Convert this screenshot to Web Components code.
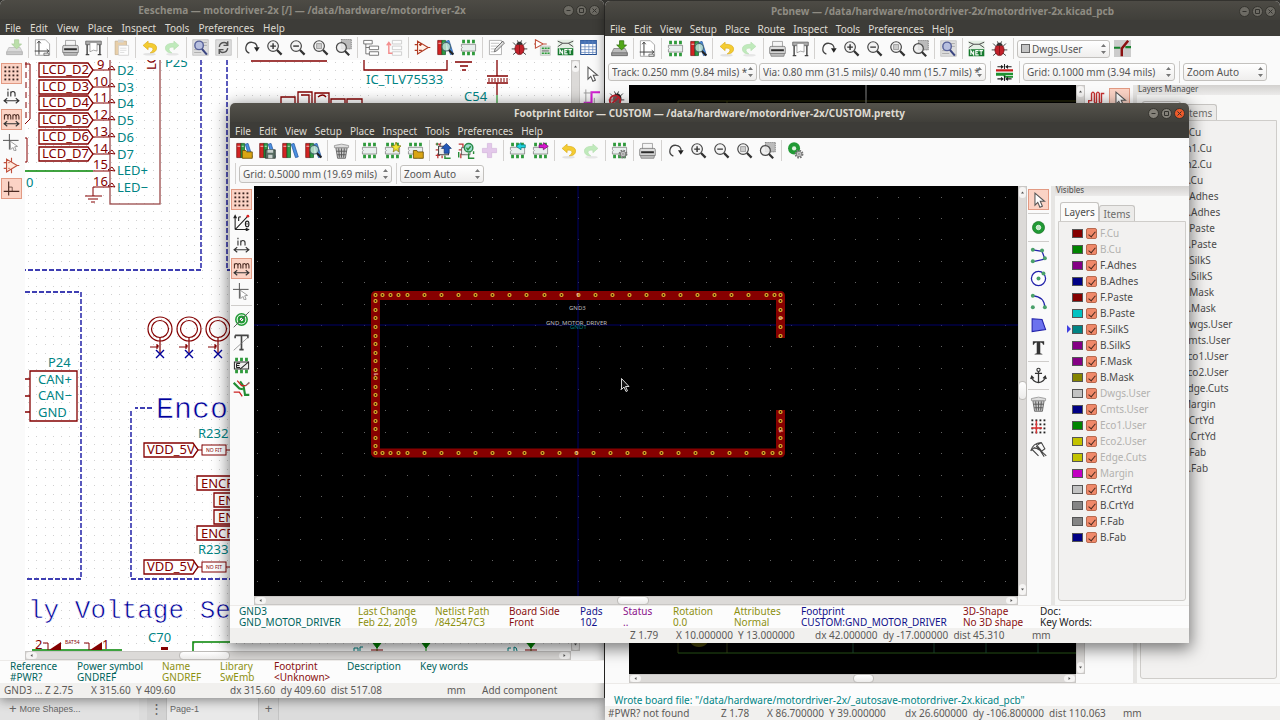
<!DOCTYPE html>
<html lang="en">
<head>
<meta charset="utf-8">
<title>KiCad desktop</title>
<style>
html,body{margin:0;height:100%;overflow:hidden}
body{font:10px/16px "Noto Sans","Open Sans",sans-serif;color:#4c4c4c;background:#3c3b37}
</style>
</head>
<body>
<kicad-desktop></kicad-desktop>

<script>
const lib = {};
const lens = '<circle cx="10" cy="10" r="7.5" fill="#f3f3f3" stroke="#4a4a4a" stroke-width="1.7"/><path d="M15.5 15.5L22 22" stroke="#333" stroke-width="3.2"/>';
const chipBody = '<path d="M2 7.500H22V17H2V13.500A1.800 1.800 0 0 0 2 10.500Z" fill="#e9eeee" stroke="#777" stroke-width="1"/>';
const pins = '<g fill="#2f9a3c"><path d="M3 1h4v5H3zM10 1h4v5h-4zM17 1h4v5h-4zM3 18h4v5H3zM10 18h4v5h-4zM17 18h4v5h-4z"/></g>';
const chip = chipBody + pins;
const books = '<path d="M1 2h6v20H1z" fill="#d32323" stroke="#701010"/><path d="M7 2h5v20H7z" fill="#2c9a45" stroke="#155b25"/><path d="M13 3l4-1 6 19-4 1z" fill="#4b91e2" stroke="#1e4f9a"/><path d="M2 6h4M8 6h3" stroke="#fff"/>';
const folder = '<path d="M9 12h5l1 2h8v9H9z" fill="#d9a514" stroke="#6d5208" stroke-width="1.200"/>';
const bug = '<path d="M3 5l5 5M21 5l-5 5M1 14h22M3 22l6-5M21 22l-6-5M9 2l2 4M15 2l-2 4" stroke="#333" stroke-width="1.300"/>';
const drive = '<path d="M4 12h16l3 6v4H1v-4z" fill="#bcbcbc" stroke="#777"/><path d="M1 18h22v4H1z" fill="#9a9a9a" stroke="#666"/>';
const gear = '<circle cx="17" cy="17" r="4.500" fill="none" stroke="#777" stroke-width="3.500" stroke-dasharray="2.200 1.300"/><circle cx="17" cy="17" r="3.800" fill="#ddd" stroke="#666"/><circle cx="17" cy="17" r="1.500" fill="#fff" stroke="#666"/>';
const dotGrid = (c) => { let s=''; for (let y=0;y<4;y++) for (let x=0;x<4;x++) s+=`<rect x="${2+x*5.7}" y="${2+y*5.7}" width="2.6" height="2.6" fill="${c}"/>`; return s; };
const arrows = '<path d="M2 18h20M6 14.500L1.500 18 6 21.500M18 14.500l4.500 3.500L18 21.500" fill="none" stroke="#333" stroke-width="1.500"/>';
Object.assign(lib, {
  save: drive + '<path d="M12 1h6v6h4l-7 7-7-7h4z" fill="#52a818" stroke="#2b6b08"/>',
  saveoff: '<g opacity=".5">' + drive + '<path d="M12 1h6v6h4l-7 7-7-7h4z" fill="#7cc35a" stroke="#5b9b3c"/></g>',
  page: '<path d="M2 1h14l6 6v16H2z" fill="#fff" stroke="#888"/><path d="M7 3v19M1 17h20M4.500 6L7 3l2.500 3M18 14.500l3 2.500-3 2.500" fill="none" stroke="#444" stroke-width="1.400"/><path d="M14 20h7v3h-7z" fill="#eee" stroke="#555"/>',
  print: '<path d="M5 2h14v9H5z" fill="#f5f5f5" stroke="#888"/><path d="M1 11q0-2 2-2h18q2 0 2 2v8H1z" fill="#dcdcdc" stroke="#666"/><path d="M3 13h18v3H3z" fill="#2c2c2c"/><path d="M2 19h20l-1 4H3z" fill="#bbb" stroke="#777"/>',
  plot: '<path d="M1 3h22v5H1z" fill="#aaa" stroke="#555"/><path d="M3 8v14M21 8v14M1 22h5M18 22h5" stroke="#444" stroke-width="2"/><path d="M7 5h10v12q-5-3-10 1z" fill="#fff" stroke="#888"/>',
  paste: '<g opacity=".6"><path d="M3 3h16v19H3z" fill="#dcb273" stroke="#a07c45"/><path d="M7 1h8v4H7z" fill="#bbb"/><path d="M8 9h14v14H8z" fill="#fff" stroke="#aaa"/><path d="M10 13h9M10 16h9M10 19h6" stroke="#bbb"/></g>',
  undo: '<ellipse cx="12" cy="21.500" rx="9" ry="1.800" fill="#e2e2e2"/><path d="M10 3L3 9l7 6v-3.500q7-.5 7 3 0 3-4 5 9 0 9-7 0-6.500-12-6.500z" fill="#f4cc32" stroke="#dcae1c"/>',
  redo: '<g opacity=".55"><ellipse cx="12" cy="21.500" rx="9" ry="1.800" fill="#d5d5d5"/><path d="M14 3l7 6-7 6v-3.500q-7-.5-7 3 0 3 4 5-9 0-9-7 0-6.500 12-6.500z" fill="#8fdc87" stroke="#7cc874"/></g>',
  find: '<path d="M1 1h22v22H1z" fill="#dedede" stroke="#bbb"/><path d="M14 5h7M16 9h5M3 19h10M3 15h6" stroke="#999"/><circle cx="10" cy="9" r="6" fill="#b7bfdf" stroke="#576199" stroke-width="2"/><path d="M14 14l7 8" stroke="#3b4681" stroke-width="3"/>',
  replace: '<path d="M1 1h22v22H1z" fill="#dedede" stroke="#bbb"/><path d="M6 11q1-6 7-6 4 0 5 4M18 13q-1 6-7 6-4 0-5-4M18 3v6h-6M6 21v-6h6" fill="none" stroke="#555" stroke-width="2"/>',
  refresh: '<path d="M9 20A8 8 0 1 1 20 12" fill="none" stroke="#444" stroke-width="1.800"/><path d="M15.500 11.500h8l-4 6.500z" fill="#222"/>',
  zoomin: lens + '<path d="M6 10h8M10 6v8" stroke="#333" stroke-width="2"/>',
  zoomout: lens + '<path d="M6 10h8" stroke="#333" stroke-width="2"/>',
  zoomfit: lens + '<path d="M6.500 6.500h7v7h-7z" fill="#ccc" stroke="#888"/>',
  zoomsel: '<path d="M9 0h14v14H9z" fill="#bbb" stroke="#666" stroke-dasharray="2 1"/><circle cx="9" cy="12" r="7" fill="#ececec" fill-opacity=".85" stroke="#4a4a4a" stroke-width="1.700"/><path d="M14 17l6 6" stroke="#333" stroke-width="3"/>',
  tree: '<path d="M1 2h12v5H1zM9 10h13v5H9zM9 18h13v5H9zM4 7v14h5M4 12h5" fill="#fff" stroke="#666" stroke-width="1.200"/>',
  treeup: '<g opacity=".5"><path d="M9 2h13v5H9zM9 10h13v5H9zM9 18h13v5H9z" fill="#fff" stroke="#888"/><path d="M9 20H4V6M1 9l3-4 3 4" fill="none" stroke="#e22" stroke-width="2"/></g>',
  opamp: '<path d="M5 3l15 9L5 21zM1 8h4M1 16h4M20 12h3M7 8h4M9 6v4M7 16h4" fill="#fff3ea" stroke="#b03a22" stroke-width="1.600"/>',
  browse: books + '<circle cx="13" cy="11" r="6" fill="#bfe3d3" fill-opacity=".85" stroke="#44636b" stroke-width="1.500"/><path d="M17 16l6 6" stroke="#222" stroke-width="3"/>',
  chip,
  edit: '<path d="M2 2h17v20H2z" fill="#fff" stroke="#999"/><path d="M4 6h12M4 10h10M4 14h7M4 18h5" stroke="#aaa"/><path d="M9 18l1-4L21 3l2 3-11 11z" fill="#ddd" stroke="#444"/>',
  bug: bug + '<ellipse cx="12" cy="14" rx="6.500" ry="8" fill="#c2202a" stroke="#6f0d12"/><path d="M8 6q4-4 8 0v2H8z" fill="#333"/><path d="M12 8v13" stroke="#701010"/>',
  bugoff: bug + '<ellipse cx="13" cy="12" rx="6" ry="7" fill="#222"/><circle cx="10" cy="15" r="7.500" fill="#9b8080" fill-opacity=".6" stroke="#c6202c" stroke-width="2.500"/><path d="M5 20L15 10" stroke="#c6202c" stroke-width="2.500"/>',
  assoc: '<path d="M2 1l11 6-11 6zM0 7h2M13 7h5" fill="#fff" stroke="#c0503c" stroke-width="1.500"/><path d="M9 10h14v13H9z" fill="#dbe7dc" stroke="#bbb"/><path d="M11 12h3v2h-3zM15 12h3v2h-3zM19 12h3v2h-3zM11 19h3v2h-3zM15 19h3v2h-3zM19 19h3v2h-3z" fill="#2f9a3c"/><path d="M11 15h10v3H11z" fill="#999"/>',
  net: '<path d="M1 1h22v22H1z" fill="#e4efe4"/><path d="M1 3l7 3h8l7-3M1 11l7-5M23 11l-7-5" fill="none" stroke="#444" stroke-width="1.300"/><path d="M1 13h22v10H1z" fill="#167a2e"/><path d="M4 21v-6l4 6v-6M15 15h-4v6h4M11 18h3M16 15h5M18.500 15v6" fill="none" stroke="#fff" stroke-width="1.500"/>',
  table: '<path d="M1 2h22v20H1z" fill="#fff" stroke="#234e91" stroke-width="1.500"/><path d="M1 2h22v5H1z" fill="#4672b5"/><path d="M1 11h22M1 15h22M1 19h22M7 2v20M12.500 2v20M18 2v20" stroke="#5f84bd"/>',
  libopen: books + folder,
  libsave: books + '<path d="M9 11h14v12H9z" fill="#556a60" stroke="#26302b"/><path d="M12 11h8v4h-8zM13 18h6v5h-6z" fill="#c8d0cc"/>',
  lib: books,
  trash: '<path d="M4 8h16l-2.500 15h-11z" fill="#c9c9c9" stroke="#444"/><path d="M8 9l1 13M12 9v13M16 9l-1 13M5 13h14M6 18h12" stroke="#555" stroke-width="1.300"/><path d="M2 5q10-4 20 0v3H2z" fill="#ddd" stroke="#888"/>',
  chipnew: chip + '<path d="M17 0l2 5 5 .5-4 3.500 1 5-4-3-4 3 1-5-4-3.500 5-.5z" fill="#f0e333" stroke="#7b7410"/>',
  chipopen: chip + folder,
  brdup: '<path d="M1 3h6v5M1 11h5v8H1M10 19v4M4 23v-6h6" fill="none" stroke="#b33" stroke-width="1.800"/><path d="M8 3v-2M5 6h14v12H5z" fill="#eee" stroke="#444" stroke-width="1.500"/><path d="M16 2l7 7h-3v7h-7V9h-4z" fill="#2459b8" stroke="#0d2f70"/><path d="M3 1v4M14 19v4h8" fill="none" stroke="#298c39" stroke-width="2"/>',
  brdins: '<path d="M1 3h6v5M1 11h6M4 23v-6h6" fill="none" stroke="#b33" stroke-width="1.800"/><path d="M5 8h12v10H5z" fill="#eee" stroke="#444"/><circle cx="15" cy="8" r="6" fill="#9edbcf" stroke="#2a8b49" stroke-width="2"/><path d="M12 8l2 3 4-5M15 16v7h8M1 14v8M22 17v-4" fill="none" stroke="#298c39" stroke-width="2"/>',
  plus: '<path d="M9 2h6v7h7v6h-7v7H9v-7H2V9h7z" fill="#e3c8ea" stroke="#d3b6dc"/>',
  chipin: chip + '<path d="M23 4h-6V1l-7 5 7 5V8h6z" fill="#20d5de" stroke="#0c747a"/>',
  chipout: chip + '<path d="M10 4h6V1l7 5-7 5V8h-6z" fill="#d918d0" stroke="#720c6d"/>',
  chipgear: chip + gear,
  padgear: '<circle cx="10" cy="9" r="8.500" fill="#219a35"/><circle cx="10" cy="9" r="3" fill="#dff0df"/>' + gear,
  grid: dotGrid('#3a2420'),
  polar: '<path d="M3 22V3M3 22h19M1 6l2-4 2 4M18 20l4 2-4 2M3 22L20 4" fill="none" stroke="#222" stroke-width="1.500"/><circle cx="21" cy="3" r="2" fill="#d22"/><path d="M8 10V5q0-1 3-1" fill="none" stroke="#222" stroke-width="1.600"/><ellipse cx="20" cy="14" rx="2.500" ry="4" fill="none" stroke="#222" stroke-width="1.600"/><path d="M18 14h4" stroke="#222"/>',
  inch: '<path d="M7 5v7M7 1v2M11 12V5M11 8q0-3 3-3t3 3v4" fill="none" stroke="#333" stroke-width="1.600"/>' + arrows,
  mm: '<path d="M2 12V5M2 8q0-3 2.500-3T7 8v4M7 8q0-3 2-3t2 3v4M14 12V5M14 8q0-3 2-3t2.500 3v4M18.500 8q0-3 2-3t2 3v4" fill="none" stroke="#4a2a22" stroke-width="1.500"/>' + arrows,
  cursor: '<path d="M0 9h22M9 0v22" stroke="#555" stroke-width="1.400"/><path d="M10 10l1 12 3-3 2 5 2.500-1-2-5 4-.5z" fill="#fff" stroke="#777"/>',
  hidepin: '<path d="M5 3l15 9L5 21zM1 8h4M1 16h4M20 12h3M12 1v6M12 17v6" fill="#ffe9dc" stroke="#c0503c" stroke-width="1.600"/><path d="M7 8h3M7 16h3" stroke="#c0503c"/>',
  ortho: '<path d="M8 2v20M1 16h22" stroke="#4a2a22" stroke-width="1.600"/><path d="M8 10h5v6" fill="none" stroke="#4a2a22"/>',
  padsk: '<circle cx="12" cy="12" r="8" fill="#fff" stroke="#219a35" stroke-width="2.200"/><circle cx="12" cy="12" r="4" fill="none" stroke="#219a35" stroke-width="3"/><path d="M1 23L23 1" stroke="#555" stroke-width="1.300"/>',
  textsk: '<path d="M3 2h18v4M3 6V2M12 2v20M9 22h6" fill="none" stroke="#444" stroke-width="2.300"/><path d="M1 23L23 3" stroke="#777"/>',
  modsk: pins + '<path d="M2 7h20v10H2z" fill="#eee" stroke="#333" stroke-width="1.500"/><path d="M5 9h5M5 12h4M5 15h5M5 9v6M10 17l12-10" stroke="#222" stroke-width="1.500"/>',
  contrast: '<path d="M10 2l5 7 2 12h6" fill="none" stroke="#218c33" stroke-width="3"/><path d="M1 4l8 8 5 1" fill="none" stroke="#218c33" stroke-width="3"/><path d="M6 1l6 7h6l5-4" fill="none" stroke="#c22" stroke-width="1.800"/><path d="M1 17h8l4 6" fill="none" stroke="#c22" stroke-width="1.800"/><path d="M18 8l5-5" stroke="#888" stroke-width="1.500"/>',
  arrow: '<path d="M7 3v17l4-4 3 7 3.500-1.500-3-7h6z" fill="#fff" stroke="#555" stroke-width="1.500"/>',
  wire: '<path d="M1 21h11V6h12" fill="none" stroke="#d61fd6" stroke-width="3"/><path d="M4 2v19M1 7h11M16 14v9" stroke="#999" stroke-width="1.300"/>',
  pad: '<circle cx="12" cy="12" r="8.500" fill="#219a35" stroke="#12701f"/><circle cx="12" cy="12" r="3.200" fill="#bfe5c4" stroke="#fff"/>',
  poly: '<path d="M4 4l13 2 4 11-18 4" fill="none" stroke="#2222aa" stroke-width="1.800"/><g fill="#4aa06a"><circle cx="4" cy="4" r="2.800"/><circle cx="17" cy="5" r="2.800"/><circle cx="21" cy="16" r="2.800"/><circle cx="4" cy="20" r="2.800"/></g>',
  circle: '<circle cx="12" cy="12" r="10" fill="#fff" stroke="#2222aa" stroke-width="1.800"/><g fill="#4aa06a"><circle cx="12" cy="12" r="2.800"/><circle cx="19" cy="5" r="2.800"/></g>',
  arc: '<path d="M4 4q16 1 17 16" fill="none" stroke="#2222aa" stroke-width="1.800"/><g fill="#4aa06a"><circle cx="4" cy="4" r="2.800"/><circle cx="21" cy="20" r="2.800"/><circle cx="4" cy="20" r="2.800"/></g>',
  area: '<path d="M3 4l14 1 5 14-19 3z" fill="#6c72ee" stroke="#2222aa" stroke-width="1.500"/>',
  text: '<path d="M4 3h16v5h-1.500q-.5-3-4-3v15l3 1v1h-11v-1l3-1V5q-3.500 0-4 3H4z" fill="#333"/>',
  anchor: '<circle cx="12" cy="4" r="2.300" fill="none" stroke="#333" stroke-width="1.600"/><path d="M12 6v16M7 9h10M2 14q2 7 10 8 8-1 10-8M1 17l1.500-4 3 3M23 17l-1.500-4-3 3" fill="none" stroke="#333" stroke-width="1.800"/>',
  origin: dotGrid('#222') + '<path d="M9 4v18M2 14h15" stroke="#d33" stroke-width="2"/>',
  measure: '<path d="M1 14Q4 3 16 2q-6 3-7 6l14 13M3 12l9 9M16 2l5 9-4 3M6 9l8 4 6 9M9 5l8 10M1 14l4-4 6 1" fill="none" stroke="#444" stroke-width="1.500"/>',
  layers: '<path d="M0 0h24v24H0z" fill="#ccc"/><path d="M0 11h9M16 10h8" stroke="#17832d" stroke-width="3"/><path d="M11 23V12L20 1" fill="none" stroke="#8b1010" stroke-width="3.500"/>',
  track: '<path d="M0 9h24" stroke="#c91c1c" stroke-width="3"/><path d="M0 15h11l2 3h11M0 14h24" stroke="#1f9131" stroke-width="3" fill="none"/><path d="M2 4h7M22 4h-7M2 21h7M22 21h-7M12 0v7M12 17v7" stroke="#222" stroke-width="1.500"/><path d="M7 1l4 3-4 3zM17 1l-4 3 4 3zM7 18l4 3-4 3zM17 18l-4 3 4 3z" fill="#222"/>',
  tune: '<path d="M1 20v-5h4V5q2-4 4 0v12q2 4 3 0V5q2-4 4 0v12q2 3 3 0V5h4" fill="none" stroke="#c63030" stroke-width="2"/>',
});

function define(name, css, html, setup) {
  const t = document.createElement('template');
  t.innerHTML = `<style>:host{display:block;box-sizing:border-box}*{box-sizing:border-box}button{font:inherit;color:inherit;border:0;background:none;margin:0;padding:0}${css}</style>${html}`;
  customElements.define(name, class extends HTMLElement {
    connectedCallback() {
      if (this.shadowRoot) return;
      const root = this.attachShadow({mode: 'open'});
      root.append(t.content.cloneNode(true));
      if (setup) setup(this, root);
    }
  });
}
const attr = (el, n, d='') => el.getAttribute(n) ?? d;

/* toolbar parts */
define('tool-button', `
:host{width:21px;height:21px;flex:none}
button{display:block;width:21px;height:21px;padding:1px;border:1px solid transparent}
:host([active]) button{background:#fbd3c5;border-color:#e29a83}
svg{display:block;width:17px;height:17px}`,
`<button type="button"><svg viewBox="0 0 24 24" aria-hidden="true"></svg></button>`,
(el, r) => {
  r.querySelector('svg').innerHTML = lib[attr(el,'icon')];
  r.querySelector('button').setAttribute('aria-label', attr(el,'icon'));
});
define('tool-group', `
:host{display:flex;gap:2px;align-items:center;border-left:1px solid #d3d1cf;padding-left:3px}
:host([first]){border-left:0;padding-left:0}
:host([vertical]){flex-direction:column;border-left:0;padding-left:0;border-top:1px solid #cfcdcb;padding-top:3px}
:host([vertical][first]){border-top:0;padding-top:0}`, `<slot></slot>`,
(el) => {
  (attr(el,'icons')).split(' ').filter(Boolean).forEach(n => {
    const b = document.createElement('tool-button');
    if (n.endsWith('*')) { b.setAttribute('active',''); n = n.slice(0,-1); }
    b.setAttribute('icon', n);
    el.append(b);
  });
});
define('tool-bar', `
:host{display:flex;gap:3px;height:25px;padding:2px 4px;background:#fafafa}
:host([second]){height:23px;padding:0 5px 2px;gap:4px}
:host([column]){flex-direction:column;width:24px;height:auto;align-items:flex-start;padding:3px 1px;flex:none}
:host([wide]){width:48px}`, `<slot></slot>`);
define('combo-box', `
:host{display:flex;align-items:center;height:18px;flex:none;border:1px solid #c3c1be;border-radius:3px;padding:0 3px;background:linear-gradient(#fff,#efeeed)}
i{width:9px;height:9px;border:1px solid #666;background:#c4c4c4;flex:none;margin-right:2px}
:host(:not([swatch])) i{display:none}
select{appearance:none;flex:1;min-width:0;height:16px;border:0;background:none;padding:0;margin:0 -4px 0 0;font:inherit;color:#555;outline:0}
svg{width:5px;height:10px;flex:none}`,
`<i></i><select><option></option></select><svg viewBox="0 0 5 10"><path d="M0 3L2.500 0 5 3zM0 7l2.500 3L5 7z" fill="#777"/></svg>`,
(el, r) => {
  el.style.width = attr(el,'size') + 'px';
  r.querySelector('option').textContent = attr(el,'value');
  r.querySelector('select').setAttribute('aria-label', attr(el,'value'));
});

/* window frame */
define('desk-window', `
:host{position:absolute;display:flex;flex-direction:column;background:#fafafa;border-radius:5px 5px 0 0;overflow:hidden;box-shadow:0 2px 12px rgba(0,0,0,.45)}
.bar{height:19px;display:grid;grid-template-columns:1fr auto 1fr;align-items:center;background:linear-gradient(#4d4b45,#403f3a);color:#8f8c83;font-weight:700;line-height:20px;white-space:pre;flex:none}
:host([focused]) .bar{color:#dfdbd2;background:linear-gradient(#54524b,#403f3a)}
.ctl{justify-self:end;display:flex;gap:2px;padding-right:4px}
.ctl button{width:11px;height:11px;border-radius:50%;background:#6d6b64;border:1px solid #35342f}
:host([focused]) .ctl button{background:#85827a}
:host([focused]) .ctl button:last-child{background:#ee5a2a}
.ctl svg{display:block;width:9px;height:9px}
nav{height:16px;display:flex;gap:var(--menu-gap,8px);padding-left:5px;background:#3d3c38;color:#dedad2;line-height:18px;flex:none;white-space:pre}
.body{flex:1;min-height:0;display:flex}
h1{font:inherit;margin:0;grid-column:2}`,
`<div class="bar"><h1></h1><div class="ctl">
<button type="button" aria-label="Minimise"><svg viewBox="0 0 9 9"><path d="M2.500 4.500h4" stroke="#33322e"/></svg></button>
<button type="button" aria-label="Maximise"><svg viewBox="0 0 9 9"><path d="M2.500 2.500h4v4h-4z" fill="none" stroke="#33322e"/></svg></button>
<button type="button" aria-label="Close"><svg viewBox="0 0 9 9"><path d="M2.500 2.500l4 4M6.500 2.500l-4 4" stroke="#33322e"/></svg></button></div></div>
<nav></nav><slot name="tools"></slot><div class="body"><slot></slot></div><slot name="info"></slot><slot name="status"></slot>`,
(el, r) => {
  r.querySelector('h1').textContent = attr(el,'heading');
  attr(el,'menus').split(' ').forEach(m => {
    const b = document.createElement('button'); b.type = 'button'; b.textContent = m; r.querySelector('nav').append(b);
  });
});

/* canvas with its two scroll bars */
define('scroll-view', `
:host{flex:1;min-width:0;display:grid;grid-template-columns:minmax(0,1fr) 9px;grid-template-rows:minmax(0,1fr) 9px}
.v,.h{display:flex;background:#dcdad8;border:1px solid #c9c7c5}
.v{flex-direction:column}
.cap{flex:none;background:#f5f4f3;border-radius:4px;display:block}
.v .cap{width:7px;height:11px}.h .cap{width:11px;height:7px}
.track{flex:1;position:relative}
.thumb{position:absolute;background:linear-gradient(#fff,#ecebea);border:1px solid #bdbbb8;border-radius:4px}
.h .thumb{height:9px;top:-1px;left:var(--hx);width:var(--hw)}
.v .thumb{width:9px;left:-1px;top:var(--vy,0);height:var(--vh,0);display:var(--vd,none)}
svg{display:block;width:100%;height:100%}`,
`<slot></slot>
<div class="v"><span class="cap"><svg viewBox="0 0 7 11"><path d="M2 6.500h3L3.500 4.500z" fill="#555"/></svg></span><div class="track"><div class="thumb"></div></div><span class="cap"><svg viewBox="0 0 7 11"><path d="M2 4.500h3L3.500 6.500z" fill="#555"/></svg></span></div>
<div class="h"><span class="cap"><svg viewBox="0 0 11 7"><path d="M6.500 2v3L4.500 3.500z" fill="#555"/></svg></span><div class="track"><div class="thumb"></div></div><span class="cap"><svg viewBox="0 0 11 7"><path d="M4.500 2v3L6.500 3.500z" fill="#555"/></svg></span></div>`);

/* message panel: "Title|value|colour" per field */
define('info-panel', `
:host{display:grid;height:23px;line-height:11px;white-space:pre;background:#fcfcfc;border-top:1px solid #eceae8;flex:none;position:relative;z-index:1}
div{min-width:0}p{margin:0}`, ``,
(el, r) => {
  el.style.gridTemplateColumns = attr(el,'columns').split(' ').map(n => n + 'px').join(' ') + ' auto';
  attr(el,'fields').split(';').forEach(f => {
    const [a, b, c] = f.split('|');
    const d = document.createElement('div'); d.style.color = c;
    for (const t of [a, b]) { const p = document.createElement('p'); p.textContent = t || '\u00a0'; d.append(p); }
    r.append(d);
  });
});
define('status-bar', `
:host{display:grid;height:15px;line-height:15px;white-space:pre;background:#f1f0ee;color:#5c5a58;flex:none}`, ``,
(el, r) => {
  el.style.gridTemplateColumns = attr(el,'columns').split(' ').map(n => n + 'px').join(' ') + ' auto';
  attr(el,'fields').split(';').forEach(f => { const s = document.createElement('span'); s.textContent = f; r.append(s); });
});

/* layer list */
define('layer-row', `
:host{display:flex;align-items:center;height:16px}
.mark{width:13px;display:flex;justify-content:flex-end;padding-right:1px;flex:none}
.mark svg{width:4px;height:8px;display:none}
:host([current]) .mark svg{display:block}
.sw{width:11px;height:9px;border:1px solid #555;margin-right:3px;flex:none}
label{display:flex;align-items:center;gap:3px}
:host([dim]) label{color:#b3b1af}
input{appearance:none;width:11px;height:11px;margin:0;border:1px solid #b96a50;border-radius:2px;background:#f0896a;display:grid;place-items:center}
input:checked::before{content:"";width:3px;height:6px;border:solid #4a2a20;border-width:0 1px 1px 0;transform:rotate(40deg)}`,
`<span class="mark"><svg viewBox="0 0 4 8"><path d="M0 0l4 4-4 4z" fill="#4040e0"/></svg></span><span class="sw"></span><label><input type="checkbox" checked><span></span></label>`,
(el, r) => {
  r.querySelector('.sw').style.background = attr(el,'color');
  r.querySelector('label span').textContent = attr(el,'name');
});
define('layer-panel', `
:host{display:flex;flex-direction:column;flex:none;background:#f8f8f7;border-left:4px solid #e6e5e3}
h2{margin:0;height:10px;padding-left:1px;font:8px/8px "Noto Sans",sans-serif;background:linear-gradient(#d3d1cf,#ecebea);white-space:pre}
.tabs{display:flex;align-items:flex-end;margin-top:6px;padding-left:5px;height:19px;flex:none}
button{border:1px solid #c6c4c1;border-bottom:0;border-radius:3px 3px 0 0;height:16px;background:#ecebe9;width:36px;color:#6d6b69}
button[aria-selected=true]{height:19px;background:#fbfbfa;width:39px;color:#4c4c4c}
.box{flex:1;min-height:0;margin:0 3px 4px;border:1px solid #cfcdca;border-radius:0 0 3px 3px;background:#f2f1f0;padding-top:3px}`,
`<h2></h2><div class="tabs" role="tablist"><button type="button" role="tab" aria-selected="true">Layers</button><button type="button" role="tab">Items</button></div><div class="box"></div>`,
(el, r) => {
  el.style.width = attr(el,'size') + 'px';
  r.querySelector('h2').textContent = attr(el,'heading');
  const inner = attr(el,'inner').split(',').filter(Boolean).map(n => [n,'#c2c200']);
  const all = [['F.Cu','#840000',1],...inner,['B.Cu','#008400',1],['F.Adhes','#840084'],['B.Adhes','#000084'],['F.Paste','#840000'],['B.Paste','#00c2c2'],['F.SilkS','#008484'],['B.SilkS','#840084'],['F.Mask','#840084'],['B.Mask','#848400'],['Dwgs.User','#c2c2c2',1],['Cmts.User','#000084',1],['Eco1.User','#008400',1],['Eco2.User','#c2c200',1],['Edge.Cuts','#c2c200',1],['Margin','#c200c2',1],['F.CrtYd','#c2c2c2'],['B.CrtYd','#848484'],['F.Fab','#848484'],['B.Fab','#000084']];
  for (const [n, c, dim] of all) {
    const row = document.createElement('layer-row');
    row.setAttribute('name', n); row.setAttribute('color', c);
    if (dim && !inner.length) row.setAttribute('dim','');
    if (n === 'F.SilkS') row.setAttribute('current','');
    r.querySelector('.box').append(row);
  }
});

/* drawing canvases */
const canvasCss = `:host{min-width:0;min-height:0;overflow:hidden}svg{display:block;width:100%;height:100%}text{white-space:pre}`;
function dots(x0, y0, step, w, h) {
  let d = '';
  for (let y = y0; y < h; y += step) for (let x = x0; x < w; x += step) d += `M${Math.round(x)} ${Math.round(y)}h1`;
  return d;
}
const M = '#840000', T = '#008484', B = '#00009a';
const label = (x, y, s, w) => `<path d="M${x} ${y-7}h${w-5}l5 7-5 7h-${w-5}z" fill="#fff" stroke="${M}" stroke-width="1.300"/><text x="${x+3}" y="${y+4}" fill="${M}">${s}</text>`;
let sch = '';
['LCD_D2','LCD_D3','LCD_D4','LCD_D5','LCD_D6','LCD_D7'].forEach((s,i) => {
  const y = Math.round(70 + i*16.7);
  sch += label(39, y, s, 54) + `<path d="M93 ${y}h17" stroke="${M}"/><path d="M108 ${y-1}l4-3 3 4z" fill="none" stroke="${M}"/>`;
});
['9','10','11','12','13','14','15','16'].forEach((s,i) => { sch += `<text x="${i?93:97}" y="${Math.round(69+i*16.7)}" fill="${M}">${s}</text>`; });
['D2','D3','D4','D5','D6','D7','LED+','LED−'].forEach((s,i) => { sch += `<text x="117" y="${Math.round(75+i*16.7)}" fill="${T}">${s}</text>`; });
const circ = x => `<g fill="none" stroke="${M}" stroke-width="1.200"><circle cx="${x}" cy="329" r="12"/><circle cx="${x}" cy="329" r="8.500"/><path d="M${x} 338v15M${x-10} 347h8v-2M${x-3} 344v5"/></g><path d="M${x-4} 350l8 8M${x+4} 350l-8 8" stroke="${B}" stroke-width="1.400"/>`;
const vdd = y => label(144, y, 'VDD_5V', 54) + `<path d="M198 ${y}h4M226 ${y}h30" stroke="${M}"/><rect x="202" y="${y-5}" width="24" height="10" fill="#fff" stroke="${M}"/><text x="206" y="${y+2}" font-size="5" fill="${M}">NO FIT</text>`;
const enc = (x, y, s) => `<path d="M${x} ${y-7}h60v14h-60z" fill="#fff" stroke="${M}" stroke-width="1.300"/><text x="${x+4}" y="${y+5}" fill="${M}">${s}</text>`;
sch += `
<path d="M25 171h68" stroke="#008400" stroke-width="1.500"/><path d="M93 171h17M110 187H93v9M85 196h17M88 199h10M91 202h4" stroke="${M}" fill="none"/><path d="M108 170l4-3 3 4zM108 186l4-3 3 4z" fill="none" stroke="${M}"/>
<rect x="110" y="40" width="50" height="164" fill="none" stroke="#9a4a4a" stroke-width="1.300"/>
<text x="165" y="67" fill="${T}">P25</text><text transform="translate(156 70) rotate(-90)" fill="${M}">LC</text>
<text x="26" y="187" fill="${T}">0</text>
<path d="M25 64h5v55l-5 5M25 138h2v24h-2" fill="none" stroke="${M}"/>
<path d="M26 62v60" stroke="${M}" stroke-dasharray="6 4"/>
<path d="M201 60v210H25M227 60v210h60M25 292h56v287H25M152 408h-17M131 411v168h130" fill="none" stroke="${B}" stroke-width="1.300" stroke-dasharray="5 2"/>
${circ(160)}${circ(189)}${circ(218)}
<text x="48" y="367" fill="${T}">P24</text><path d="M30 371h47v50H30zM25 379h5M25 396h5M25 412h5" fill="none" stroke="${M}" stroke-width="1.300"/>
<text x="38" y="384" fill="${T}">CAN+</text><text x="38" y="400" fill="${T}">CAN−</text><text x="38" y="417" fill="${T}">GND</text>
<g fill="${B}" stroke="#fff" stroke-width=".6" font-family="Liberation Mono"><text x="156" y="418" font-size="30">Enco</text>
<text x="28" y="618" font-size="26">ly Voltage Se</text></g>
<text x="198" y="438" fill="${T}">R232</text><text x="198" y="554" fill="${T}">R233</text>
${vdd(450)}${vdd(567)}${enc(197,483,'ENCF')}${enc(214,500,'EN')}${enc(214,517,'EN')}${enc(197,533,'ENCF')}
<text x="148" y="642" fill="${T}">C70</text>
<path d="M32 650h90M193 651v-9h68" fill="none" stroke="#008400" stroke-width="1.500"/>
<path d="M49 650l12-8v8zM90 650l12-8v8zM161 650v-3h7v3z" fill="${M}"/><path d="M43 643h5v7M84 643h5v7" fill="none" stroke="${M}"/>
<text x="35" y="649" fill="${M}">2</text><text x="102" y="649" fill="${M}">1</text><text x="65" y="644" font-size="5" fill="${M}">BAT54</text>
<path d="M251 61h76M364 60v10h83V60M455 62h17M460 66h8M462 70h4M497 60v16M487 76h21M487 83h21M497 83v12" fill="none" stroke="${M}" stroke-width="1.300"/>
<path d="M497 95v10" stroke="#008400"/><path d="M488 80h20" stroke="${M}" stroke-width="4" stroke-dasharray="2 1" opacity=".5"/>
<text x="366" y="84" fill="${T}">IC_TLV75533</text><text x="464" y="101" fill="${T}">C54</text>
<path d="M281 104v-7h14v7M298 104V92h14v12M315 104V93h14v12M301 95h8v9M318 97q5-4 8 0M331 105v-6h14v6M347 105v-6h15v6" fill="none" stroke="${M}" stroke-width="1.300"/>
<path d="M373 643h8l-4 5zM422 643h8l-4 5zM527 643h8l-4 5z" fill="#008400" stroke="#008400"/><path d="M377 647v4M426 647v4M531 647v4" stroke="#008400"/><path d="M371 650h12M525 650h12" stroke="${M}"/><path d="M354 651v-3h4v3M360 651v-4h3M508 651v-3h3M514 651v-4q3 0 3 4" fill="none" stroke="${T}"/>`;
define('schematic-canvas', canvasCss + ':host{background:#fff}',
`<svg font-family="Noto Sans" font-size="13"><g transform="translate(-25 -60)"><path d="${dots(28,62,8.3,1400,900)}" stroke="#d0d0d0" transform="translate(0 .5)"/>${sch}</g></svg>`);

define('board-canvas', canvasCss + ':host{background:#000}',
`<svg><g transform="translate(-629 -85)" fill="none"><path d="M678 200V101h400M727 101v60" stroke="#37380f"/><path d="M866 85v18" stroke="#8a8a8a"/>
<circle cx="699" cy="636" r="11" fill="#4d4a0a"/><path d="M678 600v53M727 600v53" stroke="#3a3f14"/><path d="M678 653h400" stroke="#2b5a18"/><path d="M853 600v53M934 600v53M986 600v53M1038 600v53" stroke="#1d4a35"/></g></svg>`);

const via = [];
[375,382,390,398,407].forEach(x => via.push([x,295],[x,453]));
for (let i = 1; i <= 20; i++) via.push([Math.round(407+i*17.07),295]);
for (let i = 1; i <= 20; i++) via.push([Math.round(407+i*17.07-(i>6?2:0)),453]);
via.push([766,295],[774,295],[780,295],[763,453],[772,453],[780,453]);
[301,310,318,327,336,344,353,361,370,378,387,395,404,412,421,429,438,446].forEach(y => via.push([375,y]));
[301,310,318,327,336,412,421,429,438,446].forEach(y => via.push([780,y]));
define('footprint-canvas', canvasCss + ':host{background:#000}',
`<svg font-family="Noto Sans" font-size="6"><g transform="translate(-254 -186)">
<path d="${dots(257,196.700,21.37,1700,1000)}" stroke="#626262" transform="translate(0 .5)"/>
<path d="M254 325h2000M578 186v2000" stroke="#000068"/>
<path d="M780.500 338V295.500H375.500v157.500h405V410" fill="none" stroke="#860000" stroke-width="9" stroke-linejoin="round"/>
<g fill="#3a1800" stroke="#e0b730" stroke-width="1.200">${via.map(([x,y]) => `<circle cx="${x}.500" cy="${y}" r="1.500"/>`).join('')}</g>
<g fill="#f0b0a0" font-weight="700"><text x="576" y="297">1</text><text x="575" y="455">1</text><text transform="translate(378 376) rotate(-90)">1</text><text transform="translate(783 320) rotate(-90)">1</text><text transform="translate(783 433) rotate(-90)">1</text></g>
<text x="570" y="329" fill="#007c7c">GND1</text>
<g fill="#bdbdbd"><text x="569" y="310">GND3</text><text x="546" y="325">GND_MOTOR_DRIVER</text></g>
<path d="M621.500 378.500v11l2.500-2.500 2 4.500 1.500-.7-2-4.300h3.500z" fill="#111" stroke="#eee" stroke-width=".9"/>
</g></svg>`);

/* diagram app behind the windows */
define('diagram-footer', `
:host{position:absolute;left:0;right:0;bottom:0;height:22px;display:flex;background:#dcdcdc;font:9px/22px "Liberation Sans",sans-serif;color:#666}
.shapes{width:139px;padding-left:9px;background:#e2e2e2;text-align:left;white-space:pre;display:flex;gap:3px}
.shapes b,.add{font:400 13px/22px "Liberation Sans",sans-serif}
.tabs{display:flex;margin-left:8px}
.tabs button{border:1px solid #c4c4c4;border-width:0 1px 0 0}
.more{width:20px;background:#d3d3d3;font-size:13px}
.page{width:92px;text-align:left;padding-left:3px;background:#e9e9e9}
.add{width:20px;background:#d6d6d6}`,
`<button class="shapes" type="button"><b>+</b><span>More Shapes...</span></button><div class="tabs"><button class="more" type="button">⋮</button><button class="page" type="button">Page-1</button><button class="add" type="button">+</button></div>`);

define('kicad-desktop', `
:host{position:relative;height:100%;overflow:hidden;background:#3c3b37}
.sch{left:0;top:0;right:676px;bottom:22px;--menu-gap:9px}
.pcb{left:605px;top:1px;right:0;bottom:-1px}
.fp{left:230px;top:103px;right:91px;bottom:77px;box-shadow:0 4px 16px 2px rgba(0,0,0,.5)}
.sch .left{width:25px}
.pcb tool-bar[second]{height:24px;padding-left:3px}
.sch scroll-view{--hx:142px;--hw:51px}
.pcb scroll-view{--hx:212px;--hw:21px}
.fp scroll-view{--hx:351px;--hw:32px;--vy:183px;--vh:19px;--vd:block}
.fp info-panel{padding-left:9px}.sch info-panel{padding-left:10px}.pcb info-panel{padding-left:9px}
.fp status-bar{padding-left:400px}.sch status-bar{padding-left:4px}.pcb status-bar{padding-left:3px}`,
`<diagram-footer></diagram-footer>
<desk-window class="sch" heading="Eeschema — motordriver-2x [/] — /data/hardware/motordriver-2x" menus="File Edit View Place Inspect Tools Preferences Help">
 <tool-bar slot="tools"><tool-group first icons="saveoff"></tool-group><tool-group icons="page"></tool-group><tool-group icons="print plot"></tool-group><tool-group icons="paste"></tool-group><tool-group icons="undo redo"></tool-group><tool-group icons="find replace"></tool-group><tool-group icons="refresh zoomin zoomout zoomfit zoomsel"></tool-group><tool-group icons="tree treeup"></tool-group><tool-group icons="opamp browse chip"></tool-group><tool-group icons="edit bug assoc net table"></tool-group></tool-bar>
 <tool-bar column class="left"><tool-group vertical first icons="grid* inch mm* cursor hidepin ortho*"></tool-group></tool-bar>
 <scroll-view><schematic-canvas></schematic-canvas></scroll-view>
 <tool-bar column><tool-group vertical first icons="arrow wire"></tool-group></tool-bar>
 <info-panel slot="info" columns="67 85 58 54 73 73" fields="Reference|#PWR?|#00645c;Power symbol|GNDREF|#00645c;Name|GNDREF|#8c9010;Library|SwEmb|#8c9010;Footprint|&lt;Unknown&gt;|#8a1010;Description||#00645c;Key words||#00645c"></info-panel>
 <status-bar slot="status" columns="41 46 139 217 35" fields="GND3 ...;Z 2.75;X 315.60  Y 409.60;dx 315.60  dy 409.60  dist 517.08;mm;Add component"></status-bar>
</desk-window>
<desk-window class="pcb" heading="Pcbnew — /data/hardware/motordriver-2x/motordriver-2x.kicad_pcb" menus="File Edit View Setup Place Route Inspect Tools Preferences Help">
 <tool-bar slot="tools"><tool-group first icons="save"></tool-group><tool-group icons="page"></tool-group><tool-group icons="chip browse"></tool-group><tool-group icons="undo redo"></tool-group><tool-group icons="print plot"></tool-group><tool-group icons="refresh zoomin zoomout zoomfit zoomsel"></tool-group><tool-group icons="find"></tool-group><tool-group icons="net bug"></tool-group><tool-group><combo-box swatch size="93" value="Dwgs.User"></combo-box><tool-button icon="layers"></tool-button></tool-group></tool-bar>
 <tool-bar second slot="tools"><tool-group first><combo-box size="149" value="Track: 0.250 mm (9.84 mils) *"></combo-box><combo-box size="227" value="Via: 0.80 mm (31.5 mils)/ 0.40 mm (15.7 mils) *"></combo-box></tool-group><tool-group icons="track"></tool-group><tool-group><combo-box size="152" value="Grid: 0.1000 mm (3.94 mils)"></combo-box></tool-group><tool-group><combo-box size="84" value="Zoom Auto"></combo-box></tool-group></tool-bar>
 <tool-bar column><tool-group vertical first icons="bugoff"></tool-group></tool-bar>
 <scroll-view><board-canvas></board-canvas></scroll-view>
 <tool-bar column wide><tool-group first icons="tune arrow*"></tool-group></tool-bar>
 <layer-panel size="147" heading="Layers Manager" inner="In1.Cu,In2.Cu"></layer-panel>
 <info-panel slot="info" columns="500" fields="|Wrote board file: &quot;/data/hardware/motordriver-2x/_autosave-motordriver-2x.kicad_pcb&quot;|#008484"></info-panel>
 <status-bar slot="status" columns="113 46 138 218" fields="#PWR? not found;Z 1.78;X 86.700000  Y 39.000000;dx 26.600000  dy -106.800000  dist 110.063;mm"></status-bar>
</desk-window>
<desk-window class="fp" focused heading="Footprint Editor — CUSTOM — /data/hardware/motordriver-2x/CUSTOM.pretty" menus="File Edit View Setup Place Inspect Tools Preferences Help">
 <tool-bar slot="tools"><tool-group first icons="libopen libsave lib browse"></tool-group><tool-group icons="trash"></tool-group><tool-group icons="chip chipnew chipopen"></tool-group><tool-group icons="brdup brdins plus"></tool-group><tool-group icons="chipin chipout"></tool-group><tool-group icons="undo redo"></tool-group><tool-group icons="chipgear"></tool-group><tool-group icons="print"></tool-group><tool-group icons="refresh zoomin zoomout zoomfit zoomsel"></tool-group><tool-group icons="padgear"></tool-group></tool-bar>
 <tool-bar second slot="tools"><tool-group><combo-box size="153" value="Grid: 0.5000 mm (19.69 mils)"></combo-box></tool-group><tool-group><combo-box size="84" value="Zoom Auto"></combo-box></tool-group></tool-bar>
 <tool-bar column><tool-group vertical first icons="grid* polar inch mm* cursor"></tool-group><tool-group vertical icons="padsk textsk modsk contrast"></tool-group></tool-bar>
 <scroll-view><footprint-canvas></footprint-canvas></scroll-view>
 <tool-bar column><tool-group vertical first icons="arrow*"></tool-group><tool-group vertical icons="pad"></tool-group><tool-group vertical icons="poly circle arc area text"></tool-group><tool-group vertical icons="anchor"></tool-group><tool-group vertical icons="trash origin measure"></tool-group></tool-bar>
 <layer-panel size="138" heading="Visibles"></layer-panel>
 <info-panel slot="info" columns="119 77 74 71 43 50 61 67 162 77" fields="GND3|GND_MOTOR_DRIVER|#00645c;Last Change|Feb 22, 2019|#8c9010;Netlist Path|/842547C3|#8c9010;Board Side|Front|#8a1010;Pads|102|#10108a;Status|..|#8a108a;Rotation|0.0|#8c9010;Attributes|Normal|#8c9010;Footprint|CUSTOM:GND_MOTOR_DRIVER|#10108a;3D-Shape|No 3D shape|#8a1010;Doc:|Key Words:|#222"></info-panel>
 <status-bar slot="status" columns="46 139 217" fields="Z 1.79;X 10.000000  Y 13.000000;dx 42.000000  dy -17.000000  dist 45.310;mm"></status-bar>
</desk-window>`);
</script>
</body>
</html>
